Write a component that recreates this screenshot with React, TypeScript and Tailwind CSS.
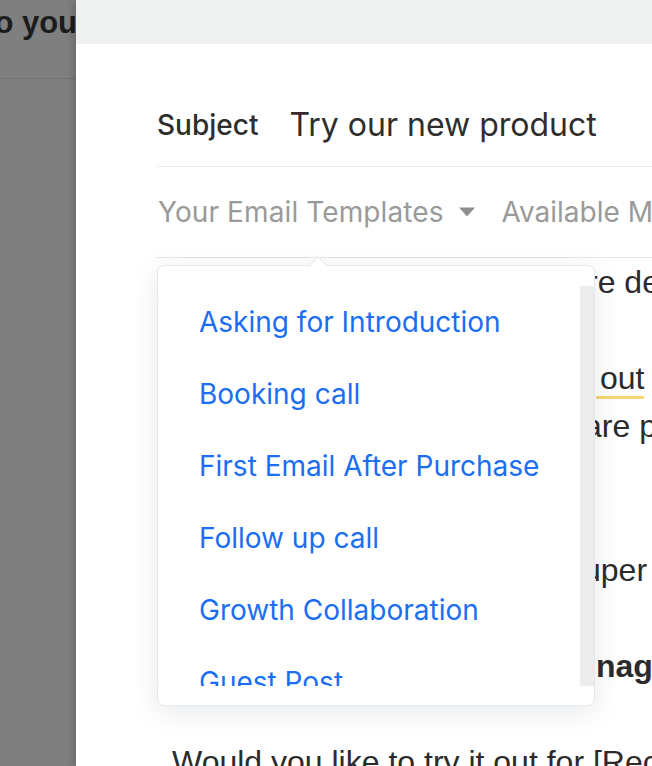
import React from "react";

const items = [
  "Asking for Introduction",
  "Booking call",
  "First Email After Purchase",
  "Follow up call",
  "Growth Collaboration",
  "Guest Post",
  "Meeting Follow Up",
];

export default function App() {
  return (
    <div className="flex h-[766px] w-[652px] overflow-hidden bg-[#7f7f7f]">
      {/* page behind overlay */}
      <div className="w-[76px] shrink-0 overflow-hidden">
        <div className="h-[79px] border-b border-[#737373] pt-[8px]">
          <div className="-ml-[28px] whitespace-nowrap font-['Liberation_Sans',Arial,sans-serif] text-[31px] font-bold leading-[30px] text-[#1c1c1c]">
            Do you want to grow your business?
          </div>
        </div>
      </div>

      {/* modal */}
      <div className="relative min-w-0 flex-1 bg-white shadow-[-3px_0_8px_rgba(0,0,0,0.18)]">
        <div className="h-[44px] bg-[#eff0f0]" />
        <div className="pl-[81px] font-['Inter',sans-serif]">
          <div className="flex h-[123px] items-center gap-[31px] whitespace-nowrap border-b border-[#ececec] pt-[40px]">
            <span className="shrink-0 text-[28px] font-medium text-[#2e2e2e]">Subject</span>
            <span className="shrink-0 text-[32px] text-[#2e2e2e]">Try our new product</span>
          </div>

          <div className="relative flex h-[91px] items-center whitespace-nowrap border-b border-[#e6e6e6] pl-[1px] text-[28px] text-[#9a9a9a]">
            <span className="shrink-0 tracking-[0.1px]">Your Email Templates</span>
            <svg className="ml-[15px] shrink-0" width="16" height="10" viewBox="0 0 16 10">
              <path d="M0 0.5 H16 L8 9.5 Z" fill="#8f8f8f" />
            </svg>
            <span className="ml-[27px] shrink-0">Available Merge Fields</span>

            {/* dropdown */}
            <div className="absolute left-0 top-[98px] z-10 h-[441px] w-[438px] rounded-[7px] border border-[#e4e8ef] bg-white pb-[19px] pt-[20px] shadow-[0_6px_28px_rgba(30,40,60,0.10)]">
              <div className="absolute left-[153px] top-[-7px] h-[14px] w-[14px] rotate-45 border-l border-t border-[#e4e8ef] bg-white" />
              <div className="relative flex h-[400px]">
                <div className="h-[400px] flex-1 overflow-hidden">
                  {items.map((t) => (
                    <div
                      key={t}
                      className="flex h-[72px] items-center whitespace-nowrap pl-[41px] text-[28px] text-[#1b6ef3]"
                    >
                      {t}
                    </div>
                  ))}
                </div>
                <div className="h-[400px] w-[14px] bg-[#ececec]" />
              </div>
            </div>
          </div>

          {/* email body */}
          <div className="whitespace-nowrap pl-[15px] font-['Liberation_Sans',Arial,sans-serif] text-[32px] leading-[48px] text-[#2b2b2b]">
            <div className="flex h-[48px]">
              <div className="w-[415px] shrink-0 overflow-hidden">Hi [First Name], we hope you a</div>
              <div>re delighted to share the details</div>
            </div>
            <div className="h-[48px]" />
            <div className="flex h-[48px]">
              <div className="w-[424px] shrink-0 overflow-hidden">We launched it. Check</div>
              <div>
                <span className="border-b-[3px] border-[#f8d675] pl-[4px]">out</span>
              </div>
            </div>
            <div className="flex h-[48px]">
              <div className="w-[412px] shrink-0 overflow-hidden">Our team worked hard and the features</div>
              <div>are perfect for you</div>
            </div>
            <div className="h-[48px]" />
            <div className="h-[48px]" />
            <div className="flex h-[48px]">
              <div className="w-[411px] shrink-0 overflow-hidden">It is simple to set up and s</div>
              <div>uper easy to use</div>
            </div>
            <div className="h-[48px]" />
            <div className="flex h-[48px] font-bold">
              <div className="w-[424px] shrink-0 overflow-hidden">Built for every Product Ma</div>
              <div>nager</div>
            </div>
            <div className="h-[48px]" />
            <div className="h-[48px]">Would you like to try it out for [Recipient's Company]?</div>
          </div>
        </div>
      </div>
    </div>
  );
}
